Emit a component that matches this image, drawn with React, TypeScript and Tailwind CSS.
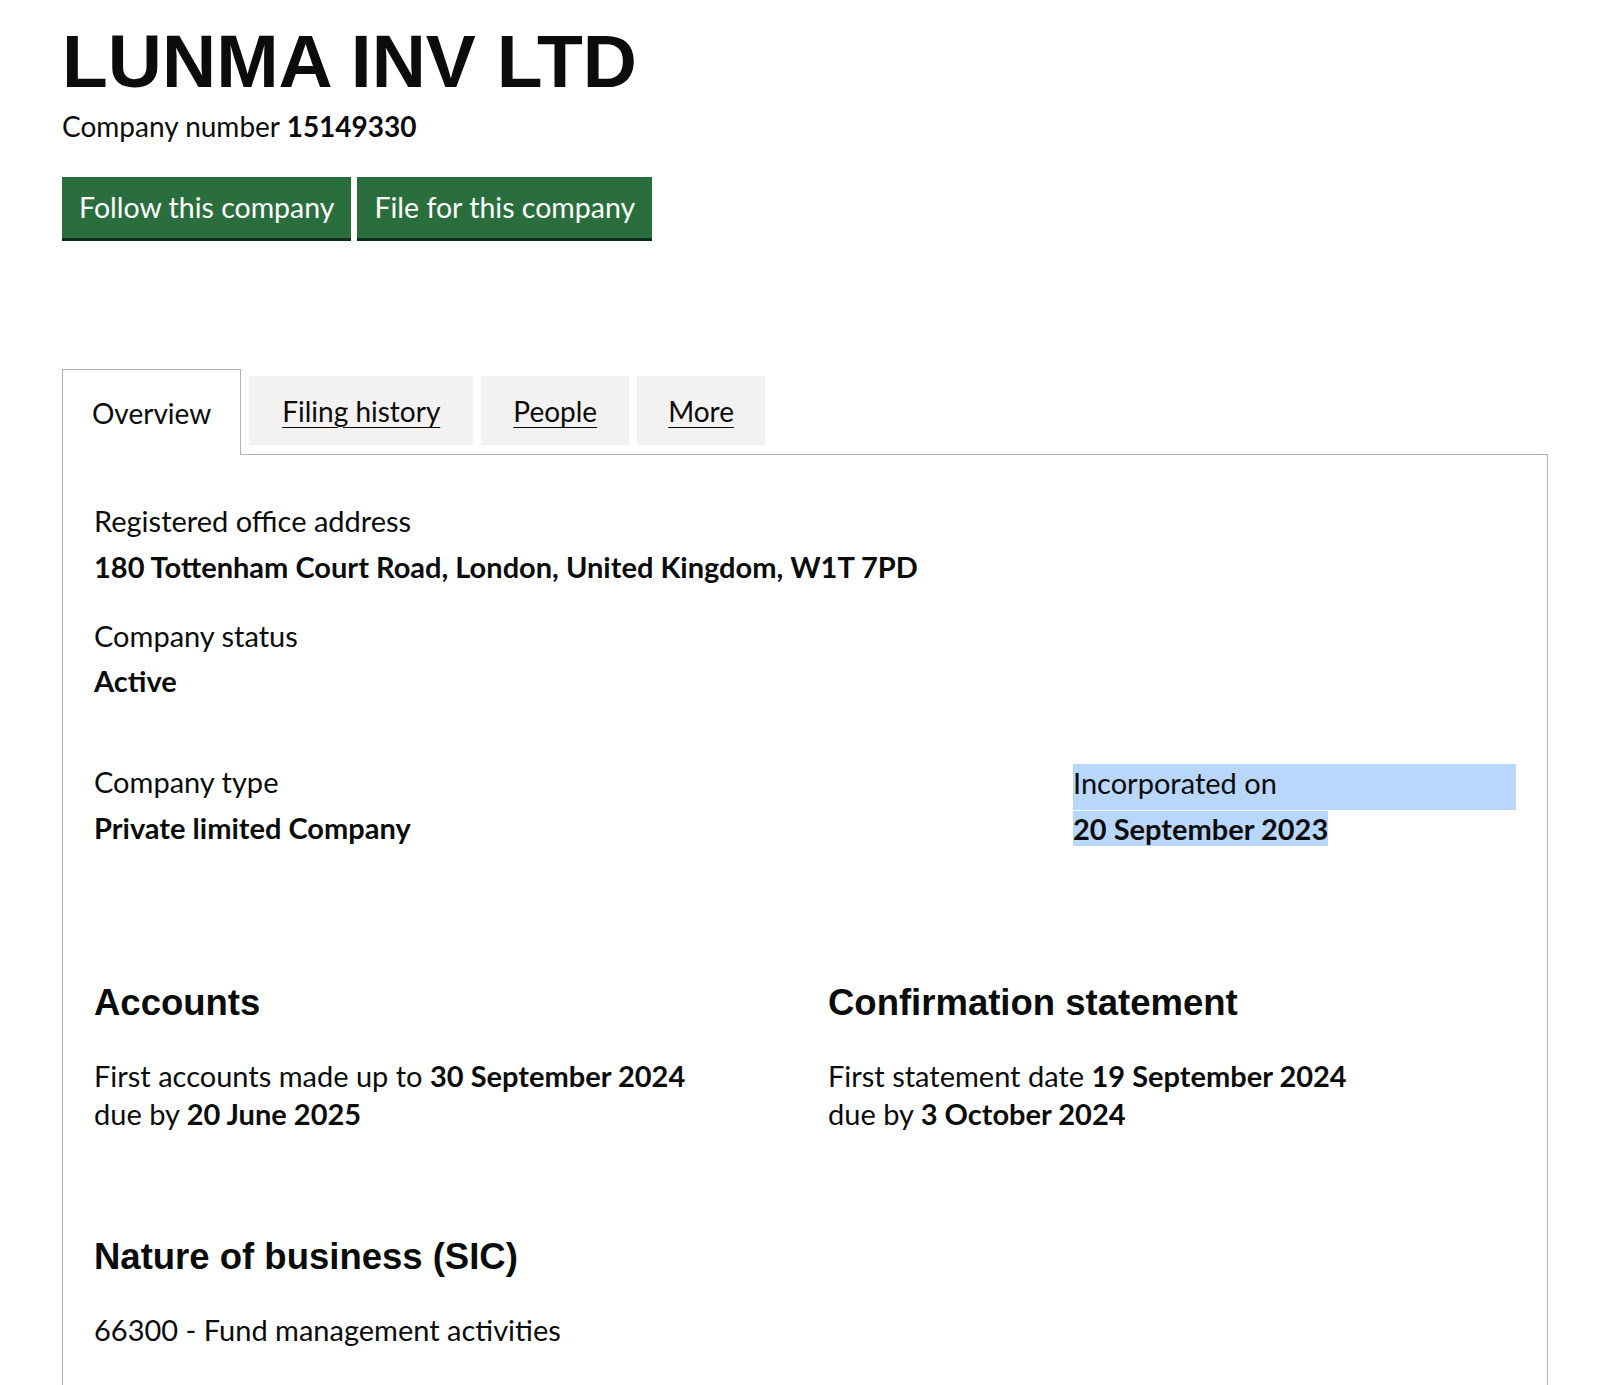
export default function App() {
  const body = "font-['Lato','Liberation_Sans',sans-serif]";
  const head = "font-['Liberation_Sans',Arial,sans-serif]";

  return (
    <div className={`min-h-[1385px] bg-white text-[#0b0c0c] ${body}`}>
      <div className="pl-[62px] pr-[52px] pt-[24px]">
        {/* Company header */}
        <h1 className={`${head} text-[75px] font-bold leading-none`}>LUNMA INV LTD</h1>
        <p className="mt-[9px] text-[28px] leading-[36px]">
          Company number <strong className="font-bold">15149330</strong>
        </p>

        <div className="mt-[33px] flex gap-[6px]">
          <button className="h-[61px] bg-[#2b6e3e] px-[17px] text-[28.5px] leading-none text-white shadow-[0_3px_0_#0f2d18]">
            Follow this company
          </button>
          <button className="h-[61px] bg-[#2b6e3e] px-[17px] text-[28.5px] leading-none text-white shadow-[0_3px_0_#0f2d18]">
            File for this company
          </button>
        </div>

        {/* Tabs */}
        <div className="mt-[131px] flex items-start gap-[8px]">
          <div className="relative z-10 -mb-px flex h-[86px] items-center border border-b-0 border-[#b1b4b6] bg-white px-[29px] text-[28px]">
            Overview
          </div>
          <a href="#" className="mt-[7px] flex h-[69px] items-center bg-[#f3f2f1] px-[33px] text-[28px] underline underline-offset-[5px] decoration-1">
            Filing history
          </a>
          <a href="#" className="mt-[7px] flex h-[69px] items-center bg-[#f3f2f1] px-[32px] text-[28px] underline underline-offset-[5px] decoration-1">
            People
          </a>
          <a href="#" className="mt-[7px] flex h-[69px] items-center bg-[#f3f2f1] px-[31px] text-[28px] underline underline-offset-[5px] decoration-1">
            More
          </a>
        </div>

        {/* Overview panel */}
        <div className="min-h-[960px] border border-b-0 border-[#b1b4b6] px-[31px] pt-[47px] text-[29px] leading-[38px]">
          <dl>
            <dt>Registered office address</dt>
            <dd className="mt-[8px] font-bold">180 Tottenham Court Road, London, United Kingdom, W1T 7PD</dd>
            <dt className="mt-[31px]">Company status</dt>
            <dd className="mt-[7px] font-bold">Active</dd>
          </dl>

          <div className="mt-[63px] grid grid-cols-[979px_1fr]">
            <dl>
              <dt>Company type</dt>
              <dd className="mt-[8px] font-bold">Private limited Company</dd>
            </dl>
            <dl>
              <dt className="mt-[1px] bg-[#b9d6fb] pb-[8px]">Incorporated on</dt>
              <dd className="font-bold">
                <span className="bg-[#b9d6fb]">20 September 2023</span>
              </dd>
            </dl>
          </div>

          <div className="mt-[135px] grid grid-cols-2 gap-x-[46px]">
            <div>
              <h2 className={`${head} text-[36.5px] font-bold leading-[40px]`}>Accounts</h2>
              <p className="mt-[34px]">
                First accounts made up to <strong className="font-bold">30 September 2024</strong>
                <br />
                due by <strong className="font-bold">20 June 2025</strong>
              </p>
            </div>
            <div>
              <h2 className={`${head} text-[36.5px] font-bold leading-[40px]`}>Confirmation statement</h2>
              <p className="mt-[34px]">
                First statement date <strong className="font-bold">19 September 2024</strong>
                <br />
                due by <strong className="font-bold">3 October 2024</strong>
              </p>
            </div>
          </div>

          <h2 className={`${head} mt-[104px] text-[36.5px] font-bold leading-[40px]`}>Nature of business (SIC)</h2>
          <p className="mt-[34px]">66300 - Fund management activities</p>
        </div>
      </div>
    </div>
  );
}
